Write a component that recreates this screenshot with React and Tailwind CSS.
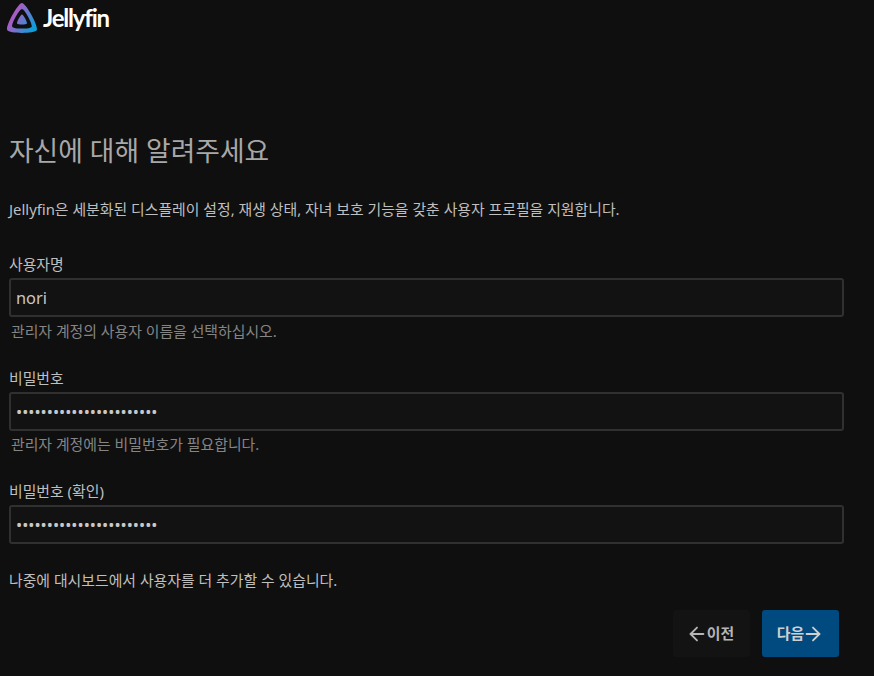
import { ArrowLeft, ArrowRight } from "lucide-react";

const fontStack = "font-['Noto_Sans','Noto_Sans_CJK_KR',sans-serif]";

function Logo() {
  return (
    <div className="flex items-center gap-[6px] pl-[7px] pt-[3px]">
      <svg viewBox="0 0 512 512" className="h-[30px] w-[30px]">
        <defs>
          <linearGradient id="jf" gradientUnits="userSpaceOnUse" x1="110.25" y1="213.3" x2="496.14" y2="436.09">
            <stop offset="0" stopColor="#AA5CC3" />
            <stop offset="1" stopColor="#00A4DC" />
          </linearGradient>
        </defs>
        <path fill="url(#jf)" d="M256 196.2c-22.4 0-94.8 131.3-83.8 153.4s156.8 21.9 167.7 0-61.3-153.4-83.9-153.4z" />
        <path fill="url(#jf)" d="M256 0C188.3 0-29.8 395.4 3.4 462.2s472.3 66 505.2 0S323.8 0 256 0zm165.1 404.3c-21.6 43.2-309.3 43.8-331.1 0S211.7 101.4 256 101.4 442.5 361 421.1 404.3z" />
      </svg>
      <span className="font-['Lato',sans-serif] text-[24px] font-bold leading-[30px] tracking-[-1.2px] text-white">Jellyfin</span>
    </div>
  );
}

function Field({ label, value, type = "text", help, helpGap = "mt-[4px]", gap }) {
  return (
    <div className={gap}>
      <label className="block h-[26px] text-[14.88px] leading-[24px] text-[#bfbfbf]">{label}</label>
      <input
        readOnly
        type={type}
        value={value}
        className="block h-[39px] w-full rounded-[3px] border-2 border-[#303030] bg-[#121212] px-[5px] text-[16.37px] text-[#c8c8c8] outline-none"
      />
      {help ? <p className={`${helpGap} h-[22px] pl-[2px] text-[14.88px] leading-[20px] text-[#858585]`}>{help}</p> : null}
    </div>
  );
}

export default function App() {
  return (
    <div className={`flex h-[676px] w-[874px] flex-col overflow-hidden bg-[#0f0f0f] ${fontStack}`}>
      <Logo />
      <main className="flex flex-col pl-[9px] pr-[30px] pt-[98px]">
        <h1 className="text-[26.78px] font-normal leading-[40px] text-[#a8a8a8]">자신에 대해 알려주세요</h1>
        <p className="mt-[28px] text-[14.88px] leading-[20px] text-[#bfbfbf]">
          Jellyfin은 세분화된 디스플레이 설정, 재생 상태, 자녀 보호 기능을 갖춘 사용자 프로필을 지원합니다.
        </p>
        <div className="mt-[33px]">
          <Field gap="mb-[23px]" label="사용자명" value="nori" help="관리자 계정의 사용자 이름을 선택하십시오." />
          <Field gap="mb-[23px]" helpGap="mt-[3px]" label="비밀번호" type="password" value="abcdefghijklmnopqrstuvw" help="관리자 계정에는 비밀번호가 필요합니다." />
          <Field gap="mb-[26px]" label="비밀번호 (확인)" type="password" value="abcdefghijklmnopqrstuvw" />
        </div>
        <p className="text-[14.88px] leading-[20px] text-[#bfbfbf]">나중에 대시보드에서 사용자를 더 추가할 수 있습니다.</p>
        <div className="mt-[20px] flex justify-end gap-[12px] pr-[5px]">
          <button type="button" className="flex h-[47px] w-[77px] items-center justify-center rounded-[3px] bg-[#131313] pr-[3px] text-[14.88px] font-bold text-[#b5b5b5]">
            <ArrowLeft size={22} className="-mr-[1px]" />
            이전
          </button>
          <button type="button" className="flex h-[47px] w-[77px] items-center justify-center rounded-[3px] bg-[#004a80] text-[14.88px] font-bold text-[#cfcfcf]">
            다음
            <ArrowRight size={22} className="-ml-[2px]" />
          </button>
        </div>
      </main>
    </div>
  );
}
